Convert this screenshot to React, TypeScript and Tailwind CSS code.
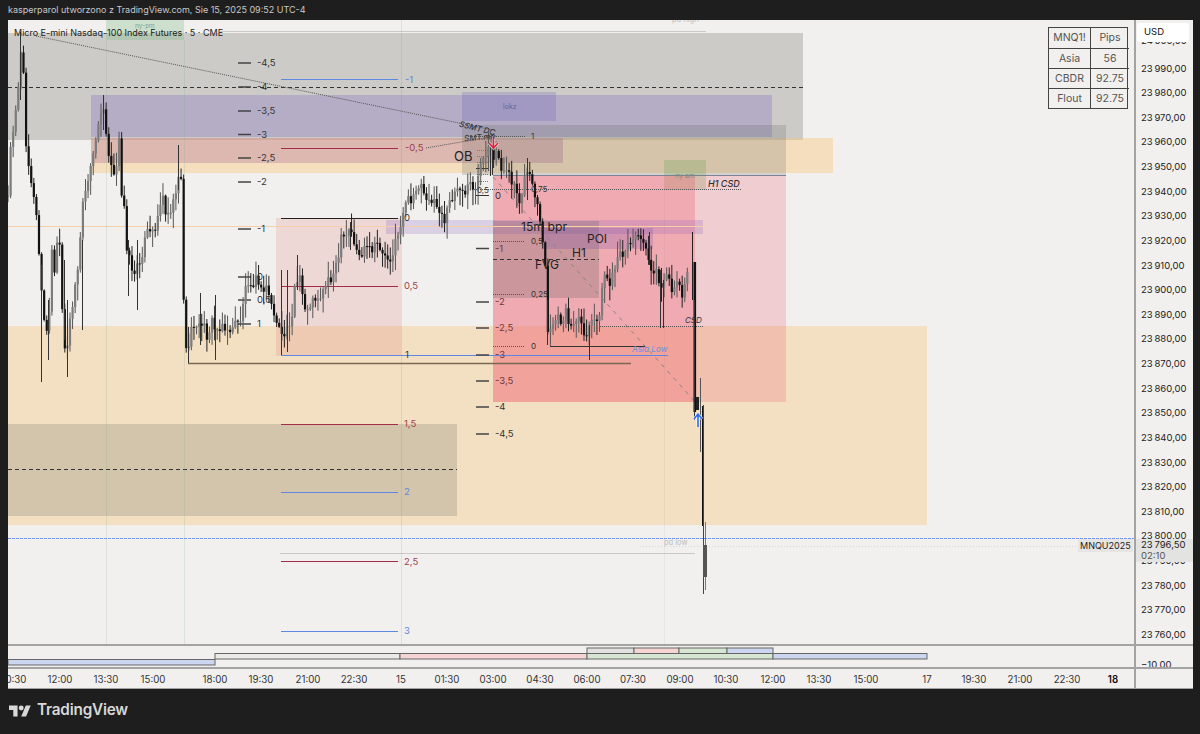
import React from "react";

const A: [number, number][] = [
  [8,197],[10,153],[13,130],[15,112],[18,90],[20,60],[22,47],[24,87],[26,140],[28,160],[31,178],[33,195],[36,210],[38,245],[40,262],[42,300],[44,320],[47,335],[50,300],[52,250],[55,280],[58,225],[60,255],[63,330],[66,365],[70,320],[75,285],[79,260],[83,200],[86,190],[89,175],[93,160],[95,140],[99,125],[103,105],[106,128],[108,150],[112,165],[116,175],[119,140],[121,195],[125,205],[127,250],[131,265],[135,275],[139,262],[143,250],[147,232],[152,235],[157,220],[162,195],[167,215],[172,205],[176,190],[180,165],[182,190],[184,326],[188,360],[192,320],[197,330],[202,322],[207,335],[212,322],[216,332],[222,322],[227,335],[233,325],[240,322],[245,290],[248,280],[253,282],[258,279],[262,295],[267,285],[273,312],[278,325],[282,340],[287,328],[292,315],[295,285],[300,280],[305,310],[310,305],[315,298],[322,295],[327,280],[333,275],[338,262],[341,240],[346,238],[350,228],[355,245],[360,258],[366,248],[372,252],[378,243],[384,256],[392,258],[397,236],[402,220],[406,198],[411,205],[416,188],[420,182],[426,195],[431,200],[436,207],[441,212],[445,228],[448,205],[452,196],[458,188],[464,195],[470,183],[475,190],[480,170],[485,160],[490,147],[494,165],[497,150],[502,170],[507,174],[515,185],[520,200],[527,170],[532,180],[535,198],[539,215],[543,250],[546,270],[548,340],[552,328],[556,318],[561,322],[566,312],[572,330],[578,318],[585,340],[590,325],[597,322],[601,303],[604,272],[610,285],[615,270],[619,258],[624,250],[628,245],[634,240],[640,234],[645,240],[648,258],[652,268],[656,272],[660,287],[664,282],[668,278],[672,288],[677,282],[682,293],[686,280],[690,272],
];
const yAt = (x: number) => {
  for (let i = 1; i < A.length; i++) if (x <= A[i][0]) {
    const [a, b] = A[i - 1]; const [c, d] = A[i];
    return b + ((d - b) * (x - a)) / (c - a);
  }
  return A[A.length - 1][1];
};
const rnd = (i: number) => { const s = Math.sin(i * 12.9898 + 4.1) * 43758.5453; return s - Math.floor(s); };
const candles: { x: number; o: number; c: number; h: number; l: number }[] = [];
{
  let prev = yAt(8);
  for (let i = 0; i < 264; i++) {
    const x = 8 + i * 2.583;
    const c = yAt(x) + (rnd(i) - 0.5) * 11;
    const big = Math.abs(c - prev);
    candles.push({ x, o: prev, c, h: Math.min(prev, c) - 1 - rnd(i + 300) * (big > 20 ? 6 : 15), l: Math.max(prev, c) + 1 + rnd(i + 600) * (big > 20 ? 6 : 15) });
    prev = c;
  }
}
const W: [number, number, number][] = [[20.5, 32, 100], [41.5, 265, 382], [48.5, 300, 360], [64.5, 260, 340], [67.5, 300, 377], [82.5, 240, 330], [103.5, 95, 130], [128.5, 240, 296], [137.5, 240, 310], [178.5, 145, 190], [188.5, 327, 363], [200.5, 293, 345], [215.5, 295, 360], [281.5, 270, 355], [287.5, 270, 352], [297.5, 255, 290], [350.5, 222, 250], [492.5, 135, 175], [527.5, 158, 200], [589.5, 325, 360], [547.5, 300, 345], [660.5, 270, 328], [663.5, 280, 328], [649.5, 232, 265]];
const Z: [number, number, number, number, string][] = [
  [8, 326, 919, 199, "rgba(248,198,125,.4)"],
  [8, 33, 795, 107, "rgba(120,118,110,.3)"],
  [91, 138, 742, 35, "rgba(248,198,125,.42)"],
  [91, 138, 472, 25, "rgba(165,95,145,.3)"],
  [91, 95, 681, 42, "rgba(110,85,190,.25)"],
  [462, 125, 324, 50, "rgba(90,90,90,.2)"],
  [462, 92, 94, 29, "rgba(90,75,190,.2)"],
  [106, 20, 78, 20, "rgba(120,190,130,.3)"],
  [664, 160, 42, 30, "rgba(120,170,90,.3)"],
  [493, 176, 293, 226, "rgba(235,110,130,.27)"],
  [493, 176, 202, 226, "rgba(240,80,100,.27)"],
  [276, 218, 125, 138, "rgba(225,120,120,.2)"],
  [386, 220, 317, 14, "rgba(125,80,190,.2)"],
  [493, 221, 106, 77, "rgba(90,90,90,.25)"],
  [543, 228, 110, 21, "rgba(110,70,170,.22)"],
  [8, 424, 449, 92, "rgba(100,100,100,.22)"],
];
type L = [number, number, number, number, string, number, string?];
const LN: L[] = [
  [8, 87.5, 803, 87.5, "#333", 1, "4 3"],
  [8, 469.5, 457, 469.5, "#333", 1, "4 3"],
  [220, 31.5, 706, 31.5, "#c9c9cc", 1],
  [8, 226.5, 708, 226.5, "#f6cfa8", 1],
  [493, 175.5, 786, 175.5, "#7f8094", 1],
  [281, 79.5, 398, 79.5, "#5f86e0", 1],
  [281, 148.5, 398, 148.5, "#a32c48", 1],
  [281, 218.5, 398, 218.5, "#222", 1],
  [281, 286.5, 398, 286.5, "#a32c48", 1],
  [281, 355.5, 668, 355.5, "#5f86e0", 1],
  [281, 424.5, 398, 424.5, "#a32c48", 1],
  [281, 492.5, 398, 492.5, "#5f86e0", 1],
  [281, 561.5, 398, 561.5, "#a32c48", 1],
  [281, 631.5, 398, 631.5, "#5f86e0", 1],
  [188, 363.5, 631, 363.5, "#7b6854", 1.5],
  [550, 346.5, 645, 346.5, "#333", 1],
  [280, 553.5, 695, 553.5, "#c9c9cc", 1],
  [106.5, 40, 106.5, 644, "rgba(120,170,130,.18)", 1],
  [184.5, 40, 184.5, 644, "rgba(120,170,130,.18)", 1],
  [401.5, 20, 401.5, 644, "rgba(120,120,120,.15)", 1],
  [664.5, 190, 664.5, 644, "rgba(120,120,120,.08)", 1],
  [468, 136.5, 525, 136.5, "#555", 1, "1 1"],
  [470, 189.5, 741, 189.5, "#555", 1, "1 1"],
  [493, 241.5, 525, 241.5, "#555", 1, "1 1"],
  [493, 294.5, 525, 294.5, "#555", 1, "1 1"],
  [493, 346.5, 525, 346.5, "#555", 1, "1 1"],
  [600, 326.5, 703, 326.5, "#555", 1, "1 1"],
  [493, 259.5, 599, 259.5, "#333", 1, "4 3"],
  [36, 36, 493, 130, "#555", 1, "1 1"],
  [426, 148, 496, 136, "#555", 1, "1 1"],
  [493, 177, 698, 405, "#85858c", 1, "4 5"],
  [8, 538.5, 1134, 538.5, "#6c8fe8", 1, "1 1"],
  [9, 538.5, 1134, 538.5, "#e08a98", 1, "1 3"],
  [640, 546.5, 1134, 546.5, "#d5d5d5", 1, "1 2"],
  [475, 195.5, 489, 195.5, "#333", 1],
  [476, 168.5, 489, 168.5, "#333", 1],
  [477, 150.5, 489, 150.5, "#777", 1, "1 1"],
  [477, 156.5, 489, 156.5, "#777", 1, "1 1"],
  [477, 162.5, 489, 162.5, "#777", 1, "1 1"],
  [477, 174.5, 489, 174.5, "#777", 1, "1 1"],
  [477, 181.5, 489, 181.5, "#777", 1, "1 1"],
  [490.5, 143, 490.5, 176, "#333", 1],
  ...[63, 87, 111, 134.5, 158, 182, 229, 277, 300, 324].map((y): L => [238, y, 251, y, "#444", 1.5]),
  ...[248.5, 302, 328, 355, 381, 407, 434].map((y): L => [476, y, 489, y, "#444", 1.5]),
];
const dark = "text-[9.5px] text-[#333]";
const red = "text-[9.5px] text-[#9b3f52]";
const blue = "text-[9.5px] text-[#5f86dc]";
const LB: [string, number, number, string][] = [
  ["Micro E-mini Nasdaq-100 Index Futures · 5 · CME", 14, 32, "text-[9px] text-[#222]"],
  ["ny-pm", 135, 26, "text-[6.5px] text-[#8aa08c]"],
  ["pd high", 672, 20, "text-[7.5px] text-[#bdbdbd]"],
  ["pd low", 664, 543, "text-[7.5px] text-[#bdbdbd]"],
  ["lokz", 503, 106, "text-[7px] text-[#6b6488]"],
  ["ny am", 675, 175, "text-[7px] text-[#8c8c70]"],
  ...[["-4,5", 63], ["-4", 87], ["-3,5", 111], ["-3", 134.5], ["-2,5", 158], ["-2", 182], ["-1", 229], ["0", 277], ["0,5", 300], ["1", 324]].map((r): [string, number, number, string] => [r[0] as string, 257, r[1] as number, dark]),
  ...[["-1", 248.5], ["-2", 302], ["-2,5", 328], ["-3", 355], ["-3,5", 381], ["-4", 407], ["-4,5", 434], ["0", 196]].map((r): [string, number, number, string] => [r[0] as string, 495, r[1] as number, r[1] === 328 || r[1] === 355 || r[1] === 381 || r[1] === 248.5 || r[1] === 302 ? "text-[9.5px] text-[#6b3a3a]" : dark]),
  ["-1", 405, 79.5, blue], ["-0,5", 405, 148, red], ["0", 404, 218, dark], ["0,5", 404, 286, red], ["1", 405, 355, dark], ["1,5", 404, 424, red], ["2", 404, 492, blue], ["2,5", 404, 562, red], ["3", 404, 631, blue],
  ["1", 531, 136, "text-[8px] text-[#333]"],
  ["0,75", 531, 189, "text-[8px] text-[#333]"],
  ["0,5", 531, 241, "text-[8px] text-[#333]"],
  ["0,25", 531, 294, "text-[8px] text-[#333]"],
  ["0", 531, 346, "text-[8px] text-[#333]"],
  ["0,5", 477, 190, "text-[8px] text-[#333]"],
  ["OB", 454, 156, "text-[13px] text-[#222]"],
  ["15m bpr", 521, 227, "text-[12.2px] text-[#222]"],
  ["POI", 587, 239, "text-[12px] text-[#222]"],
  ["H1", 572, 253, "text-[12px] text-[#222]"],
  ["FVG", 535, 265, "text-[12px] text-[#222]"],
  ["H1 CSD", 708, 183, "text-[9px] italic font-medium text-[#333]"],
  ["CSD", 685, 320, "text-[8px] italic text-[#333]"],
  ["Asia Low", 632, 349, "text-[8.2px] italic text-[#6c8fdc]"],
];
const prices = [["24\u2009000,00", 41], ...Array.from({ length: 24 }, (_, i) => [`23\u2009${990 - i * 10},00`, 68.5 + i * 24.63])] as [string, number][];
const times: [string, number, string?][] = [["10:30", 14], ["12:00", 60], ["13:30", 106], ["15:00", 153], ["18:00", 215], ["19:30", 261], ["21:00", 308], ["22:30", 354], ["15", 401], ["01:30", 447], ["03:00", 493], ["04:30", 540], ["06:00", 587], ["07:30", 633], ["09:00", 680], ["10:30", 726], ["12:00", 773], ["13:30", 819], ["15:00", 866], ["17", 927], ["19:30", 974], ["21:00", 1020], ["22:30", 1067], ["18", 1113, "font-semibold text-[#111]"]];
const bars: [number, number, number, number, string][] = [
  [8, 659.5, 207, 5.5, "#ccd6f0"], [215, 653.5, 185, 5.5, "#eceae8"],
  [400, 653.5, 187, 5.5, "#f6d4d4"], [587, 653.5, 186, 5.5, "#d6e6d2"], [773, 653.5, 154, 5.5, "#ccd6f0"],
  [587, 648, 47, 5.5, "#e2e1df"], [634, 648, 45, 5.5, "#f6d4d4"], [679, 648, 48, 5.5, "#d6e6d2"], [727, 648, 46, 5.5, "#ccd6f0"],
];
const table = [["MNQ1!", "Pips"], ["Asia", "56"], ["CBDR", "92.75"], ["Flout", "92.75"]];

export default function App() {
  return (
    <div className="w-[1200px] h-[734px] overflow-hidden bg-[#1e1e1e] flex flex-col font-['Inter',sans-serif]">
      <div className="h-5 shrink-0 pl-2 flex items-center text-[9px] text-[#c9c9c9]">kasperparol utworzono z TradingView.com, Sie 15, 2025 09:52 UTC-4</div>
      <div className="h-[669px] shrink-0 ml-2 mr-[7px] bg-[#f1f0ee] grid grid-cols-[1126px_59px] grid-rows-[624px_23px_22px] overflow-hidden">
        <div className="relative overflow-hidden">
          <svg className="absolute inset-0" width="1126" height="624" viewBox="8 20 1126 624">
            {Z.map(([x, y, w, h, f], i) => <rect key={i} x={x} y={y} width={w} height={h} fill={f} />)}
            {LN.map(([a, b, c, d, s, w, da], i) => <line key={i} x1={a} y1={b} x2={c} y2={d} stroke={s} strokeWidth={w} strokeDasharray={da} />)}
            {candles.map((k, i) => {
              const down = k.c > k.o;
              return (
                <g key={i}>
                  <line x1={k.x} x2={k.x} y1={k.h} y2={k.l} stroke={down ? "#222" : "#555"} strokeWidth={1} />
                  <rect x={k.x - 1.1} y={Math.min(k.o, k.c)} width={2.2} height={Math.max(1, Math.abs(k.c - k.o))} fill={down ? "#111" : "#7c7c7c"} />
                </g>
              );
            })}
            {W.map(([x, a, b], i) => <line key={i} x1={x} x2={x} y1={a} y2={b} stroke="#333" strokeWidth={1} />)}
            <line x1="692.5" x2="692.5" y1="232" y2="300" stroke="#222" />
            <rect x="693.5" y="262" width="2.6" height="150" fill="#111" />
            <line x1="694.5" x2="694.5" y1="300" y2="420" stroke="#333" />
            <rect x="696" y="397" width="3" height="13" fill="#222" />
            <line x1="700.5" x2="700.5" y1="378" y2="452" stroke="#555" />
            <rect x="702" y="406" width="2" height="120" fill="#111" />
            <line x1="703.5" x2="703.5" y1="405" y2="594" stroke="#444" />
            <line x1="705.5" x2="705.5" y1="522" y2="590" stroke="#777" />
            <rect x="703" y="545" width="4" height="32" fill="#555" />
            <path d="M493.5 136v12M489 143l4.5 5 4.5-5" fill="none" stroke="#fff" strokeOpacity=".7" strokeWidth="3.2" />
            <path d="M493.5 136v12M489 143l4.5 5 4.5-5" fill="none" stroke="#e8203c" strokeWidth="1.6" />
            <path d="M698 427v-13M694 419l4-5 4 5" fill="none" stroke="#fff" strokeOpacity=".7" strokeWidth="3.2" />
            <path d="M698 427v-13M694 419l4-5 4 5" fill="none" stroke="#2b6ef0" strokeWidth="1.6" />
          </svg>
          {LB.map(([t, x, y, c], i) => (
            <span key={i} className={`absolute whitespace-nowrap leading-none -translate-y-1/2 ${c}`} style={{ left: x - 8, top: y - 20 }}>{t}</span>
          ))}
          <span className="absolute left-[451px] top-[104px] rotate-[14deg] whitespace-nowrap text-[8px] italic font-medium text-[#333] leading-none">SSMT DC</span>
          <span className="absolute left-[456px] top-[113px] -rotate-[5deg] whitespace-nowrap text-[8px] italic text-[#333] leading-none">SMT.mn</span>
          <span className="absolute left-[1070px] top-[519px] whitespace-nowrap text-[9px] text-[#222] bg-[#e6e5e3] px-[2px] h-[13px] flex items-center">MNQU2025</span>
          <div className="absolute left-[1040px] top-[7px] w-[80px] grid grid-cols-[42px_38px] border border-[#444] bg-[#f1f0ee] text-[10.5px] text-[#555]">
            {table.flat().map((t, i) => (
              <div key={i} className={`h-5 flex items-center justify-center ${i % 2 === 0 ? "border-r border-[#444]" : ""} ${i > 1 ? "border-t border-[#444]" : ""}`}>{t}</div>
            ))}
          </div>
        </div>
        <div className="relative overflow-hidden border-l-2 border-[#a3a3a3]">
          {prices.map(([t, y]) => (
            <span key={t} className="absolute left-[5px] text-[9.5px] leading-none whitespace-nowrap text-[#222] -translate-y-1/2" style={{ top: y - 20 }}>{t}</span>
          ))}
          <div className="absolute left-[1px] top-[3px] w-[52px] h-[19px] bg-white rounded-[3px] pl-[7px] flex items-center text-[9.5px] text-[#111]">USD</div>
          <div className="absolute left-0 top-[519px] w-[57px] h-[23px] bg-[#e3e3e1] pl-[5px] flex flex-col justify-center text-[9.5px] leading-[10.5px]">
            <span className="text-[#222]">23{"\u2009"}796,50</span>
            <span className="text-[#555]">02:10</span>
          </div>
        </div>
        <div className="relative border-t-2 border-[#a3a3a3] overflow-hidden">
          <svg className="absolute inset-0" width="1126" height="21" viewBox="8 646 1126 21">
            {bars.map(([x, y, w, h, f], i) => <rect key={i} x={x} y={y} width={w} height={h} fill={f} stroke="#666" strokeWidth="1" />)}
          </svg>
        </div>
        <div className="relative border-t-2 border-l-2 border-[#a3a3a3] overflow-hidden">
          <span className="absolute left-[5px] top-[14px] text-[9.5px] leading-none text-[#222]">−10,00</span>
        </div>
        <div className="relative border-t-2 border-b border-[#a3a3a3] overflow-hidden">
          {times.map(([t, x, c], i) => (
            <span key={i} className={`absolute top-[6px] text-[9.7px] leading-none whitespace-nowrap -translate-x-1/2 ${c ?? "text-[#333]"}`} style={{ left: x - 8 }}>{t}</span>
          ))}
        </div>
        <div className="border-t-2 border-l-2 border-b border-[#a3a3a3]" />
      </div>
      <div className="flex-1 flex items-center pl-[9px] gap-[6px] pb-[2px]">
        <svg width="22" height="13" viewBox="0 0 36 20" fill="#d8d8d8"><path d="M14 20H7V9H0V2h14v18zM28 20h-8l7.5-18h8L28 20z" /><circle cx="20" cy="6" r="4" /></svg>
        <span className="text-[15.3px] font-semibold text-[#d8d8d8] tracking-[-0.2px]">TradingView</span>
      </div>
    </div>
  );
}
